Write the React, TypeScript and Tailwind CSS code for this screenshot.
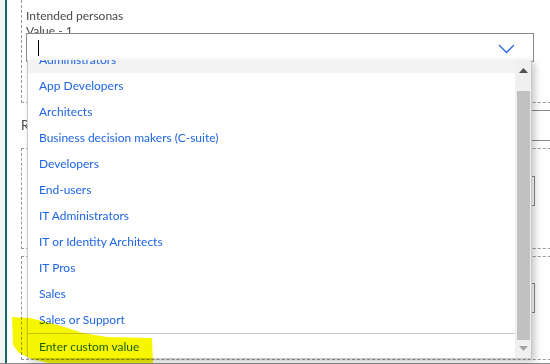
import React from "react"

const options = [
  "Administrators",
  "App Developers",
  "Architects",
  "Business decision makers (C-suite)",
  "Developers",
  "End-users",
  "IT Administrators",
  "IT or Identity Architects",
  "IT Pros",
  "Sales",
  "Sales or Support",
]

const font = { fontFamily: 'Lato, "Open Sans", sans-serif' }

const App: React.FC = () => {
  return (
    <div
      className="relative h-[364px] w-[550px] overflow-hidden bg-white text-[12px] text-[#484848]"
      style={font}
    >
      {/* Form behind the dropdown */}
      <div className="flex h-full">
        <div className="w-[5px] shrink-0 bg-[#f4f4f4]" />
        <div className="w-[2px] shrink-0 bg-[#0f6b6b]" />
        <div className="flex flex-1 flex-col overflow-hidden pl-[14px]">
          {/* Intended personas */}
          <div className="-mt-[10px] h-[113px] w-[600px] shrink-0 border border-dashed border-[#9a9a9a] pl-[4px] pt-[17px]">
            <div className="leading-[15px]">Intended personas</div>
            <div className="h-[10px] overflow-hidden leading-[15px]">Value - 1</div>
            <div className="relative flex h-[29px] w-[508px] items-center border border-[#8a8a8a] bg-white pl-[11px]">
              <div className="h-[16px] w-px bg-black" />
              <svg
                className="absolute right-[18px] top-[10px]"
                width="17"
                height="10"
                viewBox="0 0 17 10"
              >
                <path d="M1 1 L8.5 8.5 L16 1" fill="none" stroke="#2b66e0" strokeWidth="1.3" />
              </svg>
            </div>
            <div className="ml-[1px] mt-[12px] h-[23px] w-[300px] border-l border-[#8a8a8a]" />
          </div>

          {/* Row with a label that is mostly hidden */}
          <div className="flex h-[45px] shrink-0 items-center">
            <span className="text-[13px] leading-none">R</span>
            <div className="ml-[320px] h-[31px] w-[300px] border-y border-[#8a8a8a]" />
          </div>

          {/* Second group */}
          <div className="h-[101px] w-[600px] shrink-0 border border-dashed border-[#9a9a9a] pl-[4px] pt-[15px]">
            <div className="ml-[1px] h-[6px] w-[2px] bg-[#e8b48c]" />
            <div className="ml-[1px] mt-[6px] h-[30px] w-[508px] border border-[#8a8a8a]" />
            <div className="ml-[1px] mt-[2px] h-[20px] w-[300px] border-l border-[#8a8a8a]" />
          </div>

          {/* Third group */}
          <div className="mt-[7px] h-[104px] w-[600px] shrink-0 border border-dashed border-[#9a9a9a] pl-[4px] pt-[11px]">
            <div className="ml-[1px] h-[12px] w-[2px] bg-[#e8b48c]" />
            <div className="ml-[1px] mt-[3px] h-[30px] w-[508px] border border-[#8a8a8a]" />
            <div className="ml-[1px] mt-[2px] h-[22px] w-[300px] border-l border-[#8a8a8a]" />
          </div>
        </div>
      </div>
      <div className="absolute bottom-0 left-0 h-px w-full bg-[#8a8a8a]" />

      {/* Open dropdown */}
      <div className="absolute left-[27px] top-[60px] flex h-[299px] w-[505px] border-x border-b border-[#c8c8c8] bg-white shadow-[3px_3px_7px_rgba(0,0,0,0.22)]">
        <div className="flex flex-1 flex-col overflow-hidden">
          <div className="-mt-[13px] flex flex-col">
            {options.map((opt, i) => (
              <div
                key={opt}
                className={`flex h-[26px] shrink-0 items-center pl-[11px] text-[#1f66e5] ${
                  i === 0 ? "bg-[#f3f3f3]" : ""
                }`}
              >
                {opt}
              </div>
            ))}
          </div>
          <div className="flex h-[27px] shrink-0 items-center border-t border-[#c8c8c8] pl-[11px] text-[#1f66e5]">
            Enter custom value
          </div>
        </div>
        <div className="flex w-[16px] shrink-0 flex-col items-center bg-[#f0f0f0] pt-[8px] pb-[7px]">
          <svg width="9" height="5" viewBox="0 0 9 5">
            <path d="M0 5 L4.5 0 L9 5 Z" fill="#505050" />
          </svg>
          <div className="ml-[1px] mt-[18px] w-[13px] flex-1 bg-[#c1c1c1]" />
          <svg className="mt-[6px]" width="9" height="5" viewBox="0 0 9 5">
            <path d="M0 0 L9 0 L4.5 5 Z" fill="#a3a3a3" />
          </svg>
        </div>
      </div>

      {/* Yellow highlighter annotation */}
      <svg
        className="pointer-events-none absolute left-0 top-[310px] mix-blend-multiply"
        width="160"
        height="54"
        viewBox="0 0 160 54"
      >
        <path
          d="M12 7 L30 8 L58 15 L83 23 L107 27 L152 28 L153 53 L48 53 L32 49 L19 43 L13 35 Z"
          fill="#f6f600"
        />
      </svg>
    </div>
  )
}

export default App
